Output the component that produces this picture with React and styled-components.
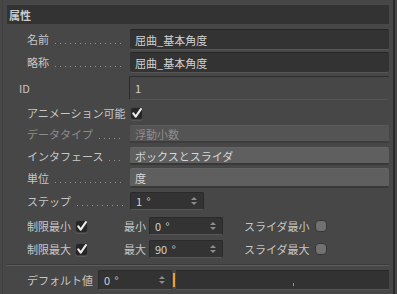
import React from "react";
import styled, { createGlobalStyle, css } from "styled-components";

const GlobalStyle = createGlobalStyle`
  html, body {
    margin: 0;
    padding: 0;
    background: #474747;
  }
  body {
    font-family: "Noto Sans CJK JP", "Noto Sans", sans-serif;
    font-size: 11px;
    color: #c6c6c6;
  }
`;

const Panel = styled.div`
  width: 393px;
  height: 294px;
  box-sizing: border-box;
  margin-left: 2px;
  border-left: 1px solid #3f3f3f;
  border-right: 2px solid #2a2a2a;
  padding: 5px 4px 0 4px;
  display: flex;
  flex-direction: column;
  overflow: hidden;
`;

const Header = styled.div`
  height: 19px;
  background: #333333;
  display: flex;
  align-items: center;
  padding-left: 2px;
  font-weight: 700;
  color: #cccccc;
`;

const Row = styled.div`
  display: flex;
  align-items: center;
  height: ${(p) => p.$h}px;
  margin-top: ${(p) => p.$mt}px;
  padding-left: ${(p) => (p.$indent != null ? p.$indent : 20)}px;
`;

const LabelCol = styled.div`
  width: ${(p) => p.$w || 96}px;
  flex: none;
  display: flex;
  align-items: center;
  margin-right: ${(p) => (p.$mr != null ? p.$mr : 7)}px;
`;

const Label = styled.span`
  white-space: nowrap;
  color: ${(p) => (p.$dim ? "#8c8c8c" : "#c6c6c6")};
  line-height: 1;
`;

const Leader = styled.span`
  flex: 1;
  height: 1px;
  margin: 8px 0 0 6px;
  background-image: repeating-linear-gradient(
    to right,
    #939393 0 1px,
    transparent 1px 5px
  );
`;

const fieldVariants = {
  dark: css`
    background: #333333;
    border-top: 1px solid #262626;
    border-bottom: 1px solid #575757;
    color: #d2d2d2;
  `,
  plain: css`
    background: #474747;
    border-top: 1px solid #2c2c2c;
    border-left: 1px solid #2c2c2c;
    border-bottom: 1px solid #555555;
    color: #d2d2d2;
  `,
  button: css`
    background: #5f5f5f;
    border-top: 1px solid #656565;
    border-bottom: 2px solid #383838;
    color: #d8d8d8;
  `,
  disabled: css`
    background: #545454;
    border-top: 1px solid #5a5a5a;
    border-bottom: 2px solid #3d3d3d;
    color: #8c8c8c;
  `,
  spin: css`
    background: #333333;
    border: 1px solid #2a2a2a;
    border-bottom-color: #575757;
    color: #d2d2d2;
  `,
};

const Field = styled.div`
  box-sizing: border-box;
  height: 100%;
  width: ${(p) => (p.$w ? `${p.$w}px` : "auto")};
  flex: ${(p) => (p.$w ? "none" : "1")};
  border-radius: 2px;
  display: flex;
  align-items: center;
  padding-left: 5px;
  padding-right: 6px;
  white-space: nowrap;
  ${(p) => fieldVariants[p.$variant || "dark"]}
`;

const FieldText = styled.span`
  flex: 1;
  word-spacing: 2px;
`;

const Arrows = styled.span`
  display: flex;
  flex-direction: column;
  gap: 2px;
  &::before,
  &::after {
    content: "";
    width: 0;
    height: 0;
    border-left: 3px solid transparent;
    border-right: 3px solid transparent;
  }
  &::before {
    border-bottom: 3px solid #8c8c8c;
  }
  &::after {
    border-top: 3px solid #8c8c8c;
  }
`;

const CheckBox = styled.span`
  width: 13px;
  height: 13px;
  border-radius: 3px;
  background: #262626;
  border: 1px solid #444444;
  box-shadow: 0 1px 0 #575757;
  box-sizing: border-box;
  display: inline-flex;
  align-items: center;
  justify-content: center;
  flex: none;
  margin-left: ${(p) => p.$ml || 0}px;
`;

const RoundBox = styled.span`
  width: 12px;
  height: 12px;
  border-radius: 4px;
  background: #717171;
  border: 1px solid #363636;
  box-sizing: border-box;
  flex: none;
  margin-left: 5px;
`;

const Group = styled.div`
  display: flex;
  align-items: center;
  height: 100%;
  width: ${(p) => p.$w}px;
  padding-left: ${(p) => p.$pl || 0}px;
  box-sizing: border-box;
  flex: none;
`;

const SubLabel = styled.span`
  white-space: nowrap;
  margin-right: ${(p) => p.$mr || 0}px;
  line-height: 1;
`;

const Separator = styled.div`
  margin-top: 6px;
  height: 0;
  border-top: 1px solid #3b3b3b;
  border-bottom: 1px solid #5c5c5c;
`;

const Accent = styled.span`
  width: 2px;
  height: 14px;
  background: #f0a020;
  flex: none;
  margin: 0 1px;
`;

const Track = styled.div`
  flex: 1;
  height: 100%;
  box-sizing: border-box;
  background: #323232;
  border-top: 1px solid #282828;
  border-bottom: 1px solid #555555;
  position: relative;
`;

const Tick = styled.span`
  position: absolute;
  left: 117px;
  bottom: 3px;
  width: 1px;
  height: 3px;
  background: #c88a2a;
`;

const Check = () => (
  <svg width="10" height="10" viewBox="0 0 10 10">
    <path
      d="M1.3 5.4 L3.7 8.6 L8.9 1.2"
      fill="none"
      stroke="#ececec"
      strokeWidth="2.1"
      strokeLinecap="round"
      strokeLinejoin="round"
    />
  </svg>
);

const LeaderLabel = ({ children, dim }) => (
  <LabelCol>
    <Label $dim={dim}>{children}</Label>
    <Leader />
  </LabelCol>
);

const LimitRow = ({ mt, limit, short, value, slider }) => (
  <Row $h={18} $mt={mt}>
    <Group $w={97}>
      <Label>{limit}</Label>
      <CheckBox $ml={4}>
        <Check />
      </CheckBox>
    </Group>
    <SubLabel $mr={3}>{short}</SubLabel>
    <Field $variant="spin" $w={74}>
      <FieldText>{value}</FieldText>
      <Arrows />
    </Field>
    <Group $w={110} $pl={21}>
      <SubLabel>{slider}</SubLabel>
      <RoundBox />
    </Group>
  </Row>
);

export default function App() {
  return (
    <>
      <GlobalStyle />
      <Panel>
        <Header>属性</Header>

        <Row $h={21} $mt={5}>
          <LeaderLabel>名前</LeaderLabel>
          <Field>屈曲_基本角度</Field>
        </Row>
        <Row $h={21} $mt={2}>
          <LeaderLabel>略称</LeaderLabel>
          <Field>屈曲_基本角度</Field>
        </Row>
        <Row $h={24} $mt={3} $indent={12}>
          <LabelCol $w={103}>
            <Label>ID</Label>
          </LabelCol>
          <Field $variant="plain">1</Field>
        </Row>
        <Row $h={20} $mt={3}>
          <LabelCol $w={103} $mr={0}>
            <Label>アニメーション可能</Label>
          </LabelCol>
          <CheckBox>
            <Check />
          </CheckBox>
        </Row>
        <Row $h={18} $mt={2}>
          <LeaderLabel dim>データタイプ</LeaderLabel>
          <Field $variant="disabled">浮動小数</Field>
        </Row>
        <Row $h={18} $mt={4}>
          <LeaderLabel>インタフェース</LeaderLabel>
          <Field $variant="button">ボックスとスライダ</Field>
        </Row>
        <Row $h={20} $mt={3}>
          <LeaderLabel>単位</LeaderLabel>
          <Field $variant="button">度</Field>
        </Row>
        <Row $h={18} $mt={4}>
          <LeaderLabel>ステップ</LeaderLabel>
          <Field $variant="spin" $w={74}>
            <FieldText>1 °</FieldText>
            <Arrows />
          </Field>
        </Row>
        <LimitRow mt={7} limit="制限最小" short="最小" value="0 °" slider="スライダ最小" />
        <LimitRow mt={5} limit="制限最大" short="最大" value="90 °" slider="スライダ最大" />

        <Separator />

        <Row $h={20} $mt={4}>
          <LabelCol $w={71} $mr={0}>
            <Label>デフォルト値</Label>
          </LabelCol>
          <Field $variant="spin" $w={74}>
            <FieldText>0 °</FieldText>
            <Arrows />
          </Field>
          <Accent />
          <Track>
            <Tick />
          </Track>
        </Row>
      </Panel>
    </>
  );
}
